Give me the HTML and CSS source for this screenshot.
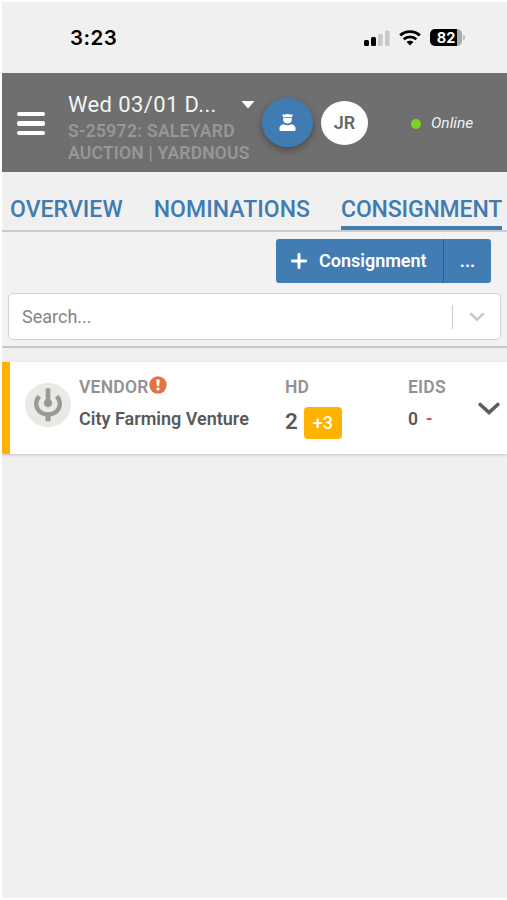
FILE: index.html
```html
<!DOCTYPE html>
<html lang="en">
<head>
<meta charset="utf-8">
<title>Consignments</title>
<link rel="stylesheet" href="styles.css">
</head>
<body>
<div class="screen">
  <div class="status">
    <span class="time">3:23</span>
    <div class="indicators">
      <svg class="signal" width="26" height="16" viewBox="0 0 26 16">
        <rect x="0" y="10" width="5" height="6" rx="1.5" fill="#000"/>
        <rect x="7" y="7" width="5" height="9" rx="1.5" fill="#000"/>
        <rect x="14" y="4" width="4.6" height="12" rx="1.5" fill="#c8c8c8"/>
        <rect x="21" y="0.5" width="4.6" height="15.5" rx="1.5" fill="#c8c8c8"/>
      </svg>
      <svg class="wifi" width="22" height="16" viewBox="0 0 22 16" fill="none" stroke="#000" stroke-width="2.9">
        <path d="M1.2 5.4C6.8.3 15.2.3 20.8 5.4"/>
        <path d="M4.7 9.3C8.3 6 13.7 6 17.3 9.3"/>
        <path d="M11 15.4L7.6 12C9.4 10.3 12.6 10.3 14.4 12Z" fill="#000" stroke="none"/>
      </svg>
      <div class="battery"><span>82</span></div>
      <i class="battery-tip"></i>
    </div>
  </div>
  <header class="header">
    <div class="menu"><i></i><i></i><i></i></div>
    <div class="sale">
      <div class="sale-title"><span>Wed 03/01 D...</span><i class="caret"></i></div>
      <div class="sale-sub"><div class="sub-one">S-25972: SALEYARD</div><div class="sub-two">AUCTION | YARDNOUS</div></div>
    </div>
    <div class="agent">
      <svg width="17" height="19" viewBox="0 0 17 19" fill="#fff">
        <path d="M3.3 1.2L5.5 1.7L8.5.8L11.5 1.7L13.7 1.2L13 4.2H4Z"/>
        <path d="M4.2 5H12.8V6.5C12.8 9 11 10.6 8.5 10.6S4.2 9 4.2 6.5Z"/>
        <path d="M4.6 11.3C6.9 12.6 10.1 12.6 12.4 11.3C15.2 11.6 16.6 13.3 16.6 15.6V16.5Q16.6 18 15 18H2Q.4 18 .4 16.5V15.6C.4 13.3 1.8 11.6 4.6 11.3Z"/>
      </svg>
    </div>
    <div class="avatar">JR</div>
    <i class="dot"></i>
    <span class="online">Online</span>
  </header>
  <nav class="tabs">
    <a class="tab overview">OVERVIEW</a>
    <a class="tab nominations">NOMINATIONS</a>
    <a class="tab active">CONSIGNMENT</a>
  </nav>
  <section class="tools">
    <div class="actions">
      <div class="add">
        <svg width="16" height="16" viewBox="0 0 16 16"><path d="M8 1.4V14.6M1.4 8H14.6" stroke="#fff" stroke-width="3" stroke-linecap="round"/></svg>
        <span>Consignment</span>
      </div>
      <div class="more">...</div>
    </div>
    <div class="search">
      <span class="placeholder">Search...</span>
      <i class="divider"></i>
      <svg width="16" height="10" viewBox="0 0 16 10"><path d="M2 2L8 7.6L14 2" fill="none" stroke="#c9c9c9" stroke-width="2.6" stroke-linecap="round"/></svg>
    </div>
  </section>
  <article class="card">
    <svg class="logo" width="46" height="46" viewBox="0 0 46 46">
      <ellipse cx="23" cy="23" rx="23" ry="22.3" fill="#e9eae6"/>
      <g fill="none" stroke="#999a96">
        <path d="M14.3 14.3C10 19 10.3 25.8 14.8 29.6C19.3 33.4 27 33.4 31.3 29.6C35.8 25.8 36 19 31.7 14.3" stroke-width="4.4"/>
        <path d="M23 6.3V21" stroke-width="4.6"/>
        <path d="M23 31V39.3" stroke-width="5"/>
      </g>
      <circle cx="23" cy="21" r="4.2" fill="#999a96"/>
    </svg>
    <div class="vendor">
      <div class="label"><span>VENDOR</span>
        <svg width="18" height="18" viewBox="0 0 18 18"><circle cx="9" cy="9" r="8.7" fill="#df7447"/><path d="M7.3 3.5H10.7L10.2 10H7.8Z" fill="#fff"/><circle cx="9" cy="12.9" r="1.7" fill="#fff"/></svg>
      </div>
      <div class="name">City Farming Venture</div>
    </div>
    <div class="head">
      <div class="label">HD</div>
      <div class="count"><span>2</span><b class="badge">+3</b></div>
    </div>
    <div class="eids">
      <div class="label">EIDS</div>
      <div class="eid-value">0<em>-</em></div>
    </div>
    <svg class="expand" width="22" height="14" viewBox="0 0 22 14"><path d="M2.2 2.5L11 10.5L19.8 2.5" fill="none" stroke="#5c5c5c" stroke-width="3.6" stroke-linecap="round"/></svg>
  </article>
</div>
</body>
</html>
```
FILE: styles.css
```css
* { box-sizing: border-box; }
body { margin: 0; background: #fff; font-family: Roboto, sans-serif; }
i { display: block; }
svg { display: block; flex: none; }
.screen { width: 505px; height: 896px; margin: 2px 0 2px 2px; background: #f0f0f0; overflow: hidden; white-space: nowrap; }
.status { height: 71px; display: flex; justify-content: space-between; align-items: center; padding: 0 42px 0 68px; }
.time { font: 600 20.5px Inter, sans-serif; letter-spacing: .45px; color: #000; }
.indicators { display: flex; align-items: center; }
.wifi { margin-left: 9px; }
.battery { width: 32px; height: 17px; margin-left: 9px; border-radius: 5px; background: linear-gradient(90deg, #000 27px, #aaa 27px); color: #fff; font: 700 14.5px/17px Inter, sans-serif; text-align: center; }
.battery-tip { width: 2px; height: 5px; margin-left: 1px; border-radius: 0 2px 2px 0; background: #bbb; }
.header { height: 99px; background: #6f6f6f; display: flex; align-items: center; color: #fff; }
.menu { display: grid; gap: 5px; width: 28px; margin: 2px 0 0 15px; }
.menu i { height: 4.5px; border-radius: 2px; background: #fff; }
.sale { width: 187px; margin-left: 23px; padding-top: 8px; }
.sale-title { display: flex; align-items: center; justify-content: space-between; height: 28px; font-size: 22px; letter-spacing: .38px; color: #f4f4f4; }
.sale-title span { margin-top: -1px; }
.caret { width: 14px; height: 8px; background: #fff; clip-path: polygon(0 0, 100% 0, 50% 100%); }
.sale-sub { padding-top: 1px; margin-bottom: -1px; font-size: 17.5px; line-height: 22px; font-weight: 600; color: #979797; }
.sub-one { letter-spacing: .3px; }
.sub-two { letter-spacing: .2px; }
.agent { width: 51px; height: 49px; margin-left: 7px; border-radius: 50%; background: #407bb4; display: flex; align-items: center; justify-content: center; box-shadow: 0 3px 7px rgba(0,0,0,.35); }
.avatar { width: 47px; height: 44px; margin-left: 8px; border-radius: 50%; background: #fff; color: #686868; font: 600 18px/44px Roboto, sans-serif; text-align: center; }
.dot { width: 10px; height: 10px; margin: 2px 0 0 43px; border-radius: 50%; background: #7ed321; }
.online { margin-left: 10px; font-size: 15.5px; font-style: italic; color: #f0f0f0; }
.tabs { height: 60px; display: flex; gap: 31px; padding: 0 6px 0 8px; border-bottom: 2px solid #ccc; }
.tab { height: 58px; padding-top: 23px; font-size: 23px; line-height: 30px; font-weight: 500; color: #417bb0; flex: none; letter-spacing: .05px; }
.active { flex: 0 0 158px; border-bottom: 4px solid #417bb0; letter-spacing: -.15px; }
.tools { height: 116px; padding: 7px 6px 0; background: #f2f2f2; border-bottom: 2px solid #c8c8c8; }
.actions { display: flex; width: 215px; height: 44px; margin-left: 268px; border-radius: 3px; overflow: hidden; background: #417cb4; color: #fff; font-size: 18px; font-weight: 600; line-height: 44px; }
.add { width: 168px; display: flex; align-items: center; gap: 12px; padding-left: 15px; border-right: 1px solid #2b5f91; }
.more { flex: 1; text-align: center; }
.search { display: flex; align-items: center; height: 47px; margin-top: 10px; border: 1.5px solid #d2d2d2; border-radius: 5px; background: #fff; padding-left: 13px; width: 493px; }
.placeholder { width: 430px; font-size: 18px; color: #848484; }
.divider { width: 1px; height: 24px; margin-right: 16px; background: #ccc; }
.card { display: flex; height: 92px; margin-top: 13.5px; border-left: 8px solid #ffb300; background: #fff; box-shadow: 0 1px 3px rgba(0,0,0,.2); color: #595959; }
.logo { margin: 20px 0 0 15px; }
.label { display: flex; align-items: center; height: 20px; font-size: 17.5px; font-weight: 600; color: #929292; }
.label svg { margin-top: -3px; }
.vendor { width: 206px; margin: 15px 0 0 8px; }
.vendor .label { letter-spacing: .25px; }
.name { margin-top: 12px; font-size: 18px; line-height: 20px; font-weight: 600; }
.head { width: 123px; margin-top: 15px; }
.count { display: flex; align-items: center; gap: 6px; margin-top: 10px; font-size: 22.5px; font-weight: 600; line-height: 32px; }
.count span { margin-top: -3px; }
.badge { width: 38px; height: 32px; border-radius: 4px; background: #ffb300; color: #fff; font-size: 18px; font-weight: 500; text-align: center; }
.eids { width: 70px; margin-top: 15px; }
.eids .label { letter-spacing: .2px; }
.eid-value { margin-top: 12px; font-size: 17.5px; line-height: 20px; font-weight: 600; }
.eid-value em { margin-left: 8px; font-style: normal; color: #e04b3c; }
.expand { margin-top: 40px; }
```
